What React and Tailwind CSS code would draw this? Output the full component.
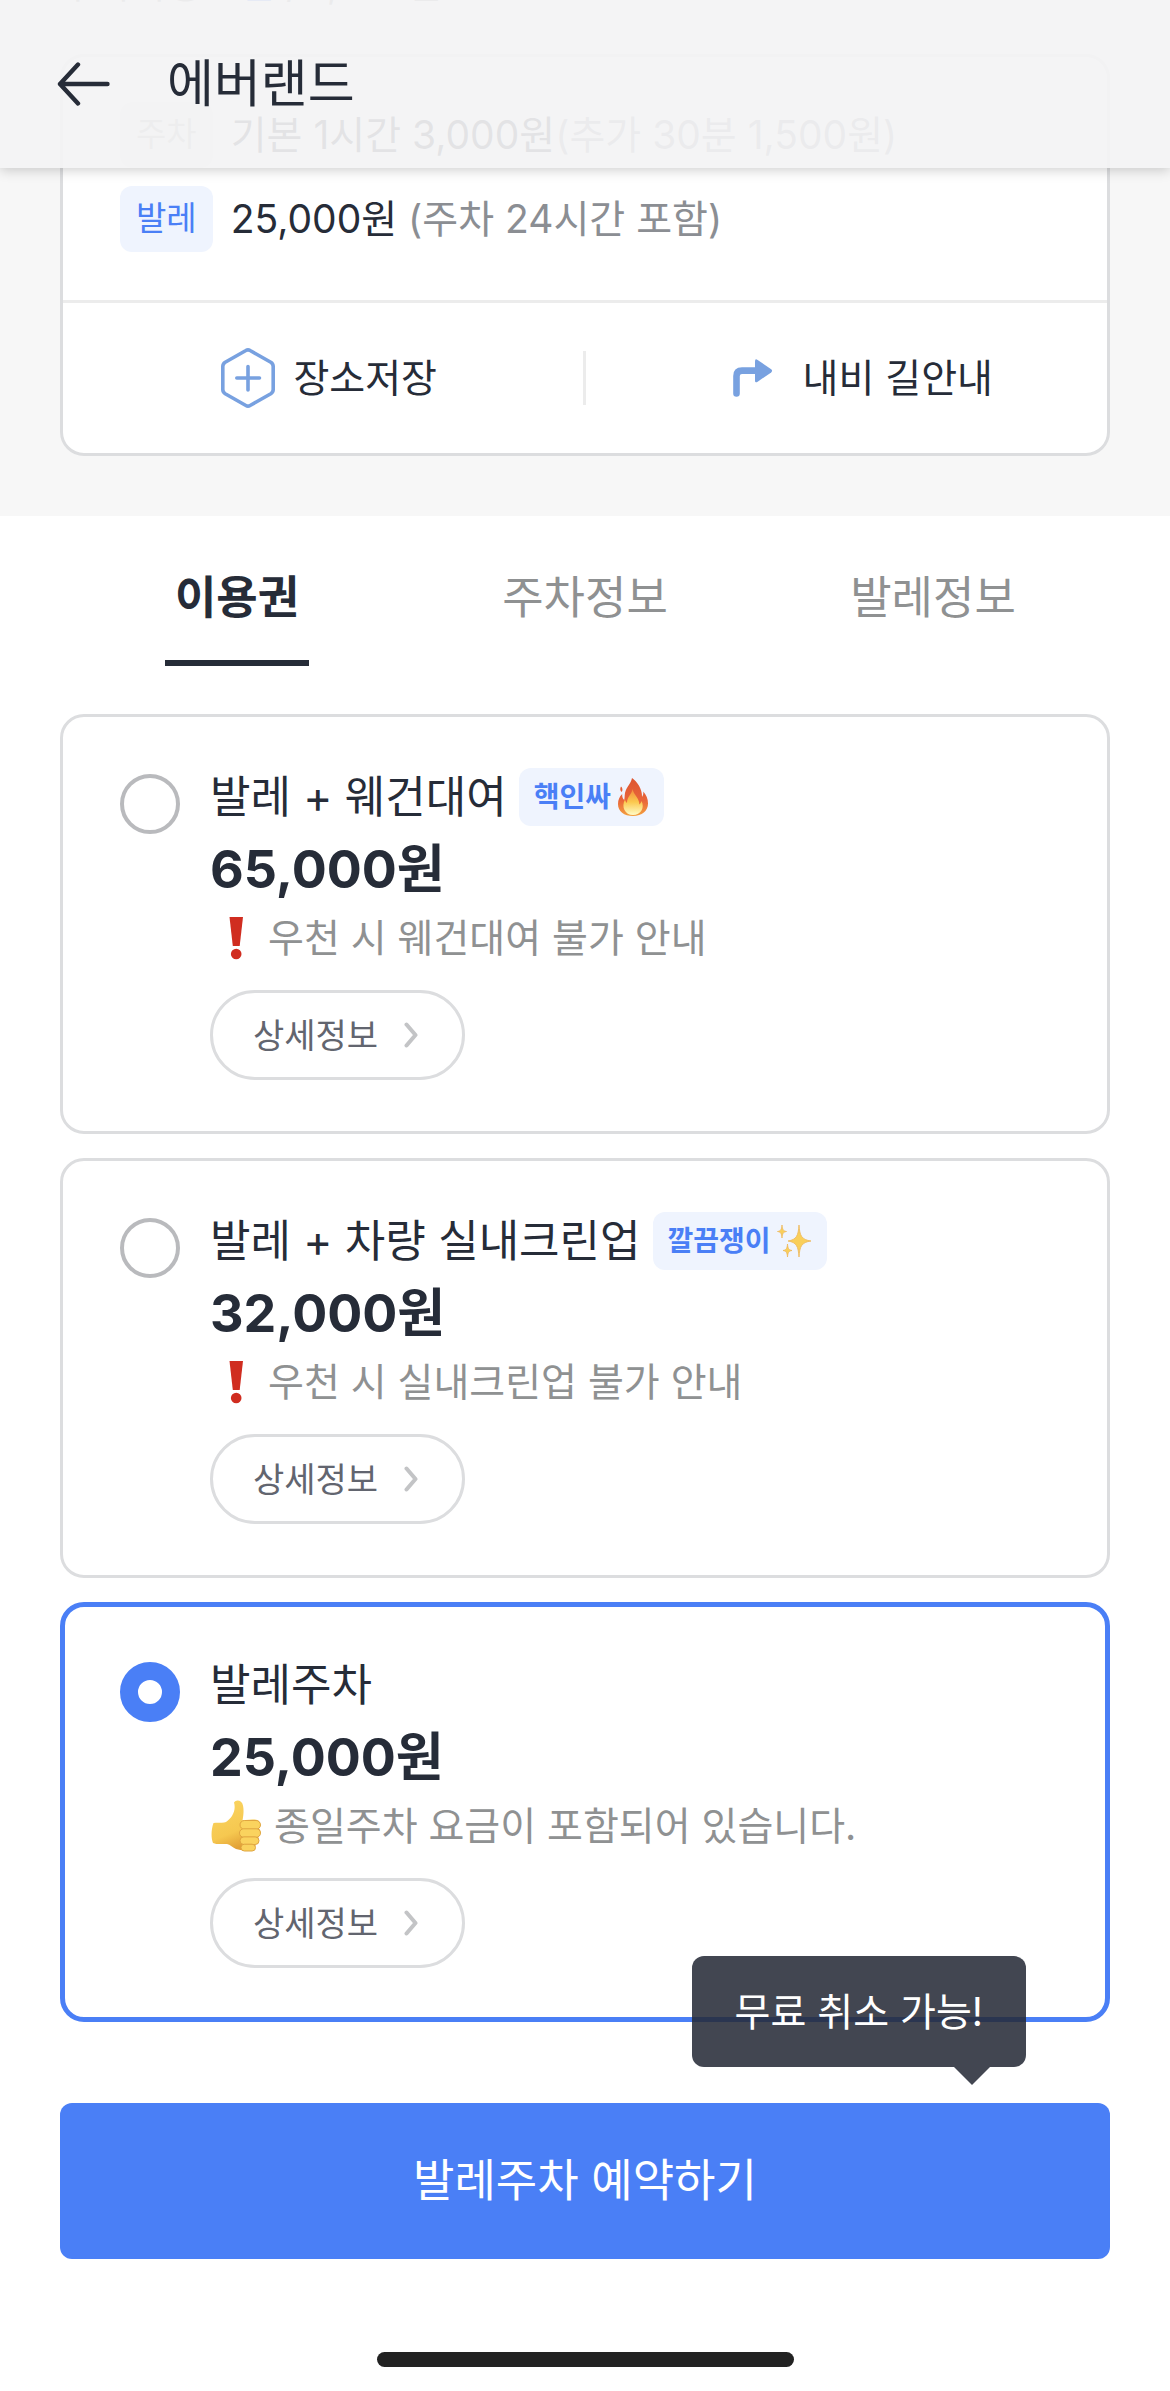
import { useState } from "react";

const plans = [
  {
    id: "wagon",
    name: "발레 + 웨건대여",
    tag: "핵인싸",
    TagIcon: FireIcon,
    price: "65,000원",
    note: "우천 시 웨건대여 불가 안내",
    NoteIcon: ExclamationIcon,
  },
  {
    id: "clean",
    name: "발레 + 차량 실내크린업",
    tag: "깔끔쟁이",
    TagIcon: SparklesIcon,
    price: "32,000원",
    note: "우천 시 실내크린업 불가 안내",
    NoteIcon: ExclamationIcon,
  },
  {
    id: "valet",
    name: "발레주차",
    price: "25,000원",
    note: "종일주차 요금이 포함되어 있습니다.",
    NoteIcon: ThumbIcon,
  },
];

const tabs = ["이용권", "주차정보", "발레정보"];

function BackIcon() {
  return (
    <svg width="54" height="44" viewBox="0 0 54 44" fill="none" stroke="#262c38" strokeWidth="4.4" strokeLinecap="round" strokeLinejoin="round" aria-hidden="true">
      <path d="M50.500 22H3M21 2.500 3 22l18 19.500" />
    </svg>
  );
}

function HexPlusIcon() {
  return (
    <svg width="54" height="60" viewBox="0 0 54 60" fill="none" stroke="#78a1e0" strokeWidth="3.6" strokeLinecap="round" strokeLinejoin="round" aria-hidden="true">
      <path d="M24.9 2.5Q27 1.2 29.1 2.5L49.8 14.3Q52.2 15.8 52.2 18.5V41.5Q52.2 44.2 49.8 45.7L29.1 57.5Q27 58.8 24.9 57.5L4.2 45.7Q1.8 44.2 1.8 41.5V18.5Q1.8 15.8 4.2 14.3Z" />
      <path d="M27 18.5V42M15.800 30H38.500" />
    </svg>
  );
}

function TurnIcon() {
  return (
    <svg width="40" height="38" viewBox="0 0 40 38" fill="none" aria-hidden="true">
      <path d="M3.500 34.500V17Q3.500 11.600 9 11.600H24" stroke="#78a1e0" strokeWidth="6.600" strokeLinecap="round" />
      <path d="M22 2.200Q22-.8 24.600.9L38.200 10.200Q40 11.800 38.200 13.400L24.600 22.700Q22 24.400 22 21.400Z" fill="#78a1e0" />
    </svg>
  );
}

function ChevronIcon() {
  return (
    <svg width="14" height="26" viewBox="0 0 14 26" fill="none" stroke="#c3c4c6" strokeWidth="4" strokeLinecap="round" strokeLinejoin="round" aria-hidden="true">
      <path d="M2.500 2.500 11.500 13 2.500 23.500" />
    </svg>
  );
}

function FireIcon() {
  return (
    <svg width="32" height="38" viewBox="0 0 32 38" aria-hidden="true">
      <defs>
        <linearGradient id="flame" x1="0" y1="0" x2="0" y2="1">
          <stop offset="0" stopColor="#dd5530" />
          <stop offset="0.6" stopColor="#e9663a" />
          <stop offset="1" stopColor="#f4a13e" />
        </linearGradient>
        <linearGradient id="core" x1="0" y1="0" x2="0" y2="1">
          <stop offset="0" stopColor="#f28a3c" />
          <stop offset="0.5" stopColor="#fbc94e" />
          <stop offset="1" stopColor="#fffcc8" />
        </linearGradient>
      </defs>
      <path d="M15 0c-1 6-6 9-7 15-.5 3-.2 5-.8 7C5.500 20.500 5 18 5.200 16 2.500 18.500 1 22 1 26c0 7.500 6 12 15 12s15-5 15-12.500c0-5-1.700-8.500-4.700-12 .3 2-.3 4-1.300 5.500C25.500 11 20 3.500 15 0ZM4 8.500c1.500 1.200 2 3.500.8 5.500C3 12.800 2.800 10.500 4 8.500Z" fill="url(#flame)" />
      <path d="M15.500 11c-.5 5-5.500 7.500-5.500 14-1-.8-1.800-2-2-3.500C4 29 8 37 16 37s12-7.500 8.500-14c-.3 1.500-1 2.800-2.200 3.500C22.500 20 16.500 17 15.500 11Z" fill="url(#core)" />
    </svg>
  );
}

function SparklesIcon() {
  return (
    <svg width="35" height="34" viewBox="0 0 35 34" fill="#f9cf5a" stroke="#edb75a" strokeWidth="0.800" aria-hidden="true">
      <path d="M22 1c.8 11 2.500 14.500 12 16-9.500 1.500-11.200 5-12 16-.8-11-2.500-14.500-11-16 8.500-1.500 10.200-5 11-16Z" />
      <path d="M5 1c.4 4.500 1.200 6 4.500 6.500C6.200 8 5.400 9.500 5 14c-.4-4.500-1.200-6-4.500-6.500C3.800 7 4.600 5.500 5 1Z" />
      <path d="M10.500 20c.4 4.500 1.200 6 4.500 6.500-3.300.5-4.100 2-4.500 6.500-.4-4.500-1.200-6-4.500-6.500 3.300-.5 4.100-2 4.500-6.500Z" />
    </svg>
  );
}

function ExclamationIcon() {
  return (
    <svg width="48" height="44" viewBox="0 0 48 44" fill="#d02d20" className="shrink-0" aria-hidden="true">
      <path d="M19.500 1H33l-3.300 29h-6.900Z" />
      <ellipse cx="26.200" cy="38" rx="5.300" ry="5.200" />
    </svg>
  );
}

function ThumbIcon() {
  return (
    <svg width="54" height="54" viewBox="0 0 54 54" className="shrink-0" aria-hidden="true">
      <defs>
        <linearGradient id="skin" x1="0" y1="0" x2="0.4" y2="1">
          <stop offset="0" stopColor="#fad562" />
          <stop offset="0.7" stopColor="#f6c850" />
          <stop offset="1" stopColor="#e2a136" />
        </linearGradient>
      </defs>
      <path d="M24 3.500c2-3.500 8-2.500 9 3 1 5 .5 9-.5 15l3-.5c8-1 14-1 14.500 3.500.3 2-.3 3.500-1.500 4.500 3 2 2.500 6.500-.8 8 1.800 3 .3 6-2.200 7 .5 4.500-1.500 6.500-5 7-5 .6-10 .5-14.500-1-3-1-6-4.500-9-5-4.500-.4-9 1-14-1C1 39 1 31 3.500 24c5-1 9.500.5 12.500-1C21.500 19.500 26.500 12 24 3.500Z" fill="url(#skin)" />
      <g fill="#fad35e" stroke="#e0a540" strokeWidth="1">
        <rect x="30" y="21.500" width="20.500" height="8.800" rx="4.400" />
        <rect x="29.500" y="29.800" width="21" height="8.500" rx="4.200" />
        <rect x="30" y="37.900" width="19" height="7.600" rx="3.800" />
        <rect x="31" y="45.200" width="14.500" height="6.800" rx="3.400" />
      </g>
    </svg>
  );
}

function PlanCard({ plan, selected, onSelect }) {
  const { TagIcon, NoteIcon } = plan;
  return (
    <li
      className={
        selected
          ? "flex items-start gap-[30px] rounded-3xl border-[5px] border-[#4a7ff6] bg-white px-[55px] py-[49px]"
          : "flex items-start gap-[30px] rounded-3xl border-[3px] border-[#dcdddf] bg-white px-[57px] py-[51px]"
      }
    >
      <input
        type="radio"
        name="plan"
        id={plan.id}
        checked={selected}
        onChange={onSelect}
        className="mt-1.5 size-[60px] shrink-0 appearance-none rounded-full border-4 border-[#b9babd] bg-white checked:border-[18px] checked:border-[#4a7ff6]"
      />
      <div className="min-w-0 flex-1">
        <label htmlFor={plan.id} className="block">
          <span className="flex h-[58px] items-center gap-3">
            <span className="text-[44px] leading-[58px]">{plan.name}</span>
            {plan.tag && (
              <span className="flex h-[58px] items-center gap-1.5 rounded-xl bg-[#eff4fe] px-[15px] text-[28px] font-bold text-[#4a7ff6]">
                {plan.tag}
                <TagIcon />
              </span>
            )}
          </span>
          <span className="block text-[52px] leading-[88px] font-bold">{plan.price}</span>
          <span className="flex h-12 items-center gap-[10px] text-[39px] text-[#8f9192]">
            <NoteIcon />
            {plan.note}
          </span>
        </label>
        <button type="button" className="mt-7 flex h-[90px] items-center gap-[26px] rounded-full border-[3px] border-[#dcdddf] px-10 text-[34px] text-[#62656f]">
          상세정보
          <span className="pr-1">
            <ChevronIcon />
          </span>
        </button>
      </div>
    </li>
  );
}

export default function App() {
  const [selected, setSelected] = useState("valet");
  const [tab, setTab] = useState("이용권");

  return (
    <div className="relative min-h-screen bg-white font-['Inter','Noto_Sans_CJK_KR',sans-serif] text-[#262c38]">
      <header className="absolute inset-x-0 top-0 z-10 flex h-[168px] items-center gap-14 bg-[#f3f3f4]/92 px-[57px] shadow-[0_2px_12px_rgba(0,0,0,0.2)]">
        <button type="button" aria-label="뒤로">
          <BackIcon />
        </button>
        <h1 className="text-[51px] leading-[60px]">에버랜드</h1>
      </header>

      <section className="bg-[#f7f7f7] pb-[60px]">
        <div className="flex h-2 items-end overflow-hidden bg-linear-to-b from-white from-50% to-[#f7f7f7] px-[60px] text-[39px] leading-[48px] whitespace-pre text-[#8f9192]">
          <p>
            주차가능 <span className="text-[#4a7ff6]">0면</span> / 1,674면
          </p>
        </div>
        <div className="mx-[60px] mt-[46px] rounded-3xl border-[3px] border-[#dcdddf] bg-white">
          <dl className="flex flex-col gap-[18px] px-[57px] pt-[45px] pb-12">
            <div className="flex items-center gap-[18px]">
              <dt className="flex h-[66px] items-center rounded-xl bg-[#f1f1ec] px-4 text-[33px] text-[#a9a9a9]">주차</dt>
              <dd className="text-[39px] leading-[66px]">
                기본 1시간 3,000원<span className="text-[#8b8e93]">(추가 30분 1,500원)</span>
              </dd>
            </div>
            <div className="flex items-center gap-[18px]">
              <dt className="flex h-[66px] items-center rounded-xl bg-[#eff4fe] px-4 text-[33px] text-[#4a7ff6]">발레</dt>
              <dd className="text-[39px] leading-[66px]">
                25,000원 <span className="text-[#8b8e93]">(주차 24시간 포함)</span>
              </dd>
            </div>
          </dl>
          <div className="flex h-[153px] items-center border-t-[3px] border-[#ececec] text-[39px]">
            <button type="button" className="flex w-1/2 items-center justify-center gap-[18px] pl-3">
              <HexPlusIcon />
              장소저장
            </button>
            <span className="h-[54px] w-[3px] shrink-0 bg-[#ececec]" />
            <button type="button" className="flex w-1/2 items-center justify-center gap-[30px] pl-8">
              <TurnIcon />
              내비 길안내
            </button>
          </div>
        </div>
      </section>

      <nav className="grid grid-cols-3 px-[63px] pt-[52px]">
        {tabs.map((name) => (
          <div key={name} className="flex justify-center">
            <button
              type="button"
              onClick={() => setTab(name)}
              className={
                name === tab
                  ? "border-b-[6px] border-[#262c38] px-[10px] pb-8 text-[45px] leading-[60px] font-bold"
                  : "border-b-[6px] border-transparent px-[10px] pb-8 text-[45px] leading-[60px] text-[#8f9192]"
              }
            >
              {name}
            </button>
          </div>
        ))}
      </nav>

      <ul className="flex flex-col gap-6 px-[60px] pt-12">
        {plans.map((plan) => (
          <PlanCard key={plan.id} plan={plan} selected={plan.id === selected} onSelect={() => setSelected(plan.id)} />
        ))}
      </ul>

      <footer className="relative px-[60px] pt-[81px] pb-6">
        <div role="tooltip" className="absolute right-36 bottom-[324px] rounded-xl bg-[#262b37]/87 px-[43px] text-[39px] leading-[111px] text-white">
          무료 취소 가능!
          <span className="absolute top-full right-9 border-x-[18px] border-t-[18px] border-x-transparent border-t-[#262b37]/87" />
        </div>
        <button type="button" className="h-[156px] w-full rounded-xl bg-[#4a7ff6] text-[45px] text-white">
          발레주차 예약하기
        </button>
        <div className="mx-auto mt-[93px] h-[15px] w-[417px] rounded-full bg-[#222222]" />
      </footer>
    </div>
  );
}
